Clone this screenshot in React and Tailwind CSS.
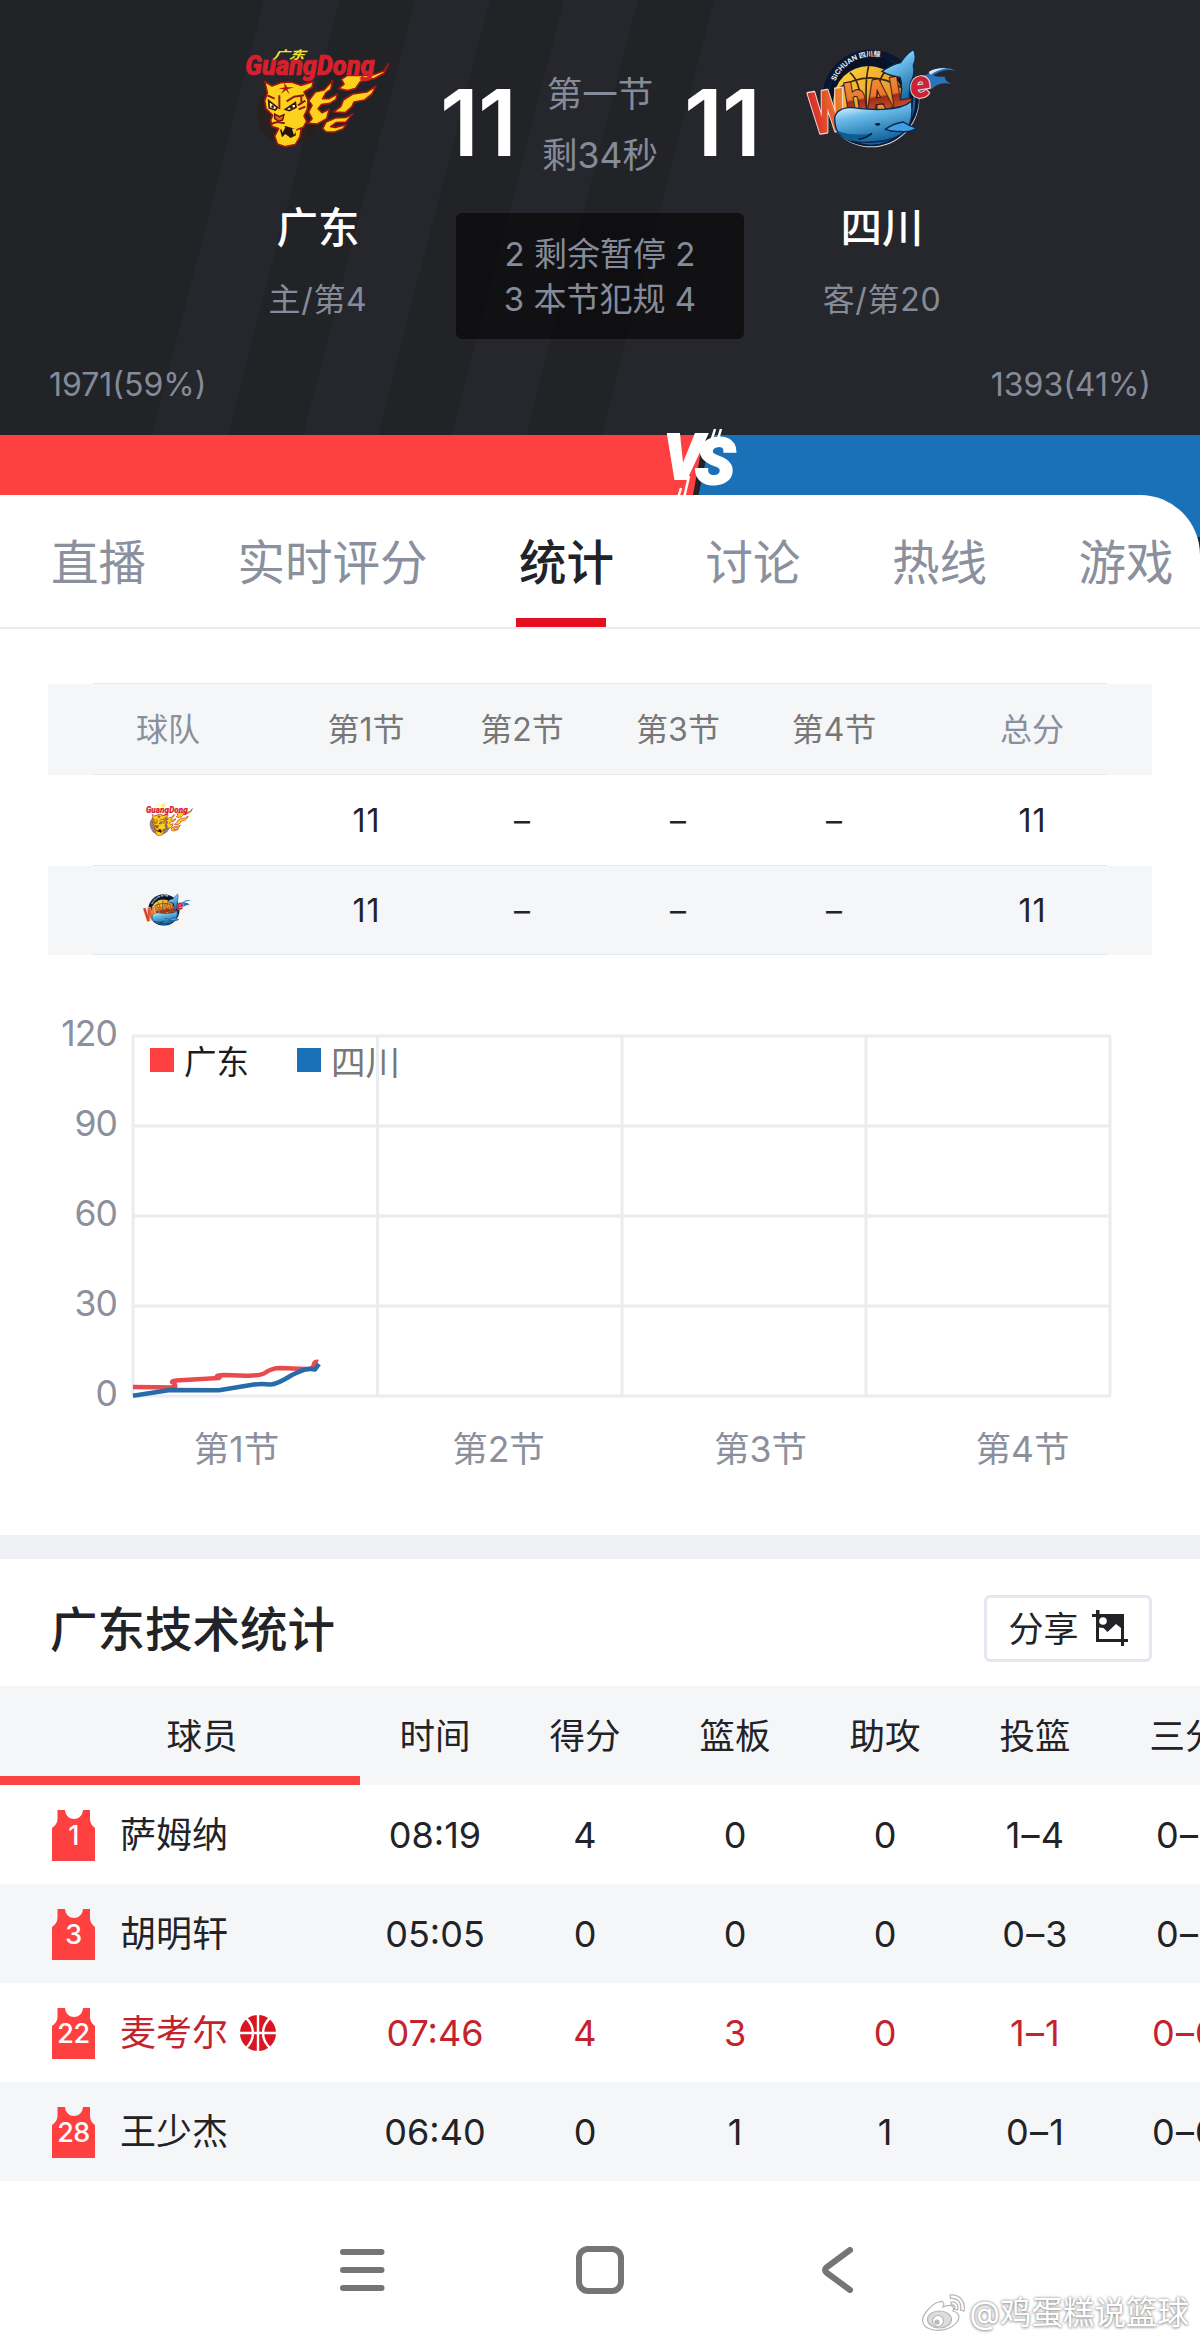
import React, { useState } from 'react';
import clsx from 'clsx';

const TABS = ['直播', '实时评分', '统计', '讨论', '热线', '游戏'];
const QUARTERS = ['第1节', '第2节', '第3节', '第4节'];
const STAT_COLUMNS = ['时间', '得分', '篮板', '助攻', '投篮', '三分'];

const PLAYERS = [
  { no: 1, name: '萨姆纳', stats: ['08:19', '4', '0', '0', '1–4', '0–1'] },
  { no: 3, name: '胡明轩', stats: ['05:05', '0', '0', '0', '0–3', '0–1'] },
  { no: 22, name: '麦考尔', onCourt: true, stats: ['07:46', '4', '3', '0', '1–1', '0–0'] },
  { no: 28, name: '王少杰', stats: ['06:40', '0', '1', '1', '0–1', '0–0'] },
];

const TigerLogo = ({ className }) => (
  <svg viewBox="0 0 510 360" className={className}>
    <circle cx="176" cy="218" r="96" fill="#2b1d16" opacity="0.55" />
    <g fill="#fdd21c" stroke="#a3160f" strokeWidth="5" strokeLinejoin="round">
      {/* Flames */}
      <path d="M308 122 L282 150 L256 156 L236 182 L246 196 L236 216 L246 236 L234 250 L262 252 L290 236 L298 208 L276 218 L264 206 L274 194 L300 190 L318 178 L322 162 L296 176 L278 176 L288 158 L302 148 Z" />
      <path d="M476 70 L462 92 L430 104 L396 106 L352 106 L334 118 L342 132 L326 146 L352 152 L376 146 L392 124 L432 116 L462 100 Z" />
      <path d="M438 138 L410 156 L368 162 L340 180 L332 200 L310 216 L346 218 L366 200 L372 186 L404 180 L426 162 Z" />
      <path d="M368 222 L348 232 L316 234 L288 246 L278 266 L288 276 L314 276 L340 266 L348 254 L316 262 L302 260 L318 248 L348 246 Z" />
      {/* Head */}
      <path d="M104 124 L126 138 L152 128 L184 126 L212 136 L250 124 L246 142 L222 156 L234 180 L232 208 L222 228 L230 244 L220 262 L198 270 L214 264 L210 290 L196 314 L166 320 L142 312 L134 288 L146 266 L126 260 L122 240 L128 226 L108 206 L104 182 L112 158 Z" />
    </g>
    <path d="M150 270 L166 258 L194 266 L198 286 L182 294 L166 282 L156 292 Z" fill="#2a1011" />
    <path d="M150 256 L158 278 L166 262 Z M186 266 L192 286 L200 266 Z" fill="#fdd21c" />
    <path d="M162 128 L164 142 L146 146 L162 148 L152 162 L168 150 L180 164 L172 148 L192 142 L172 142 Z" fill="#a3160f" />
    <path d="M116 182 L142 202 L136 210 L118 204 Z M166 208 L196 188 L198 202 L178 212 Z" fill="#f6f0a0" stroke="#3a1210" strokeWidth="5" />
    <circle cx="128" cy="200" r="4" fill="#222" />
    <circle cx="184" cy="202" r="5" fill="#222" />
    <path d="M134 222 L148 230 L162 224 L158 240 L146 244 L134 236 Z" fill="#e0611d" stroke="#5a1210" strokeWidth="4" />
    <path d="M112 166 L134 176 M222 166 L192 170 L170 184 M226 182 L204 196 M226 200 L206 208 M122 252 L142 246 L164 250 M214 168 L214 190 M148 166 L148 208" fill="none" stroke="#8e1a12" strokeWidth="6" />
    <text x="128" y="56" fontSize="34" fontStyle="italic" fontWeight="700" fill="#f1e52c" textLength="96" lengthAdjust="spacingAndGlyphs" transform="skewX(-12) translate(11 0)">广东</text>
    <text x="46" y="106" fontSize="82" fontFamily="Roboto" fontStyle="italic" fontWeight="900" fill="#d81f2c" stroke="#d81f2c" strokeWidth="2" textLength="388" lengthAdjust="spacingAndGlyphs">GuangDong</text>
  </svg>
);

const WhaleLogo = ({ className }) => (
  <svg viewBox="0 0 510 360" className={className}>
    <defs>
      <linearGradient id="ball" x1="0" y1="0" x2="1" y2="1">
        <stop offset="0" stopColor="#ffdc3c" />
        <stop offset="1" stopColor="#d86a1c" />
      </linearGradient>
      <linearGradient id="whale" x1="0.2" y1="0" x2="0.6" y2="1">
        <stop offset="0" stopColor="#ffffff" />
        <stop offset="0.35" stopColor="#69bce9" />
        <stop offset="1" stopColor="#0d5e98" />
      </linearGradient>
      <linearGradient id="word" x1="0" y1="0" x2="0" y2="1">
        <stop offset="0" stopColor="#f39a3a" />
        <stop offset="0.5" stopColor="#e9752c" />
        <stop offset="0.55" stopColor="#9c2c1c" />
        <stop offset="1" stopColor="#e8692e" />
      </linearGradient>
      <linearGradient id="initial" x1="0" y1="0" x2="1" y2="0">
        <stop offset="0" stopColor="#d9262b" />
        <stop offset="1" stopColor="#f08a2c" />
      </linearGradient>
      <path id="arc" d="M106 124 A122 122 0 0 1 290 72" />
    </defs>
    <circle cx="214" cy="178" r="144" fill="#cfd8e2" />
    <circle cx="212" cy="174" r="145" fill="#0a1730" />
    <circle cx="214" cy="182" r="132" fill="#1463a6" />
    <circle cx="212" cy="176" r="128" fill="#081226" />
    <circle cx="206" cy="184" r="106" fill="url(#ball)" />
    <path d="M206 78 Q190 140 206 280 M108 150 Q206 80 306 144 M150 98 Q190 130 180 240 M258 92 Q222 130 232 230" fill="none" stroke="#3a2412" strokeWidth="5" />
    <text fontSize="21" fontWeight="700" fill="#e5eaf2"><textPath href="#arc">SICHUAN 四川鲸</textPath></text>
    <path d="M470 92 Q420 70 380 104 L346 110 L352 156 L396 146 Q420 124 454 132 Q430 118 436 110 Q410 112 400 106 Q430 84 470 92 Z" fill="#2b74bb" />
    <path d="M386 96 Q400 84 440 84 Q410 90 392 104 Z" fill="#d5e9f5" />
    <path d="M340 28 Q352 50 340 76 Q346 104 332 126 Q326 160 330 190 L296 196 Q312 140 300 112 Q270 108 246 94 Q280 72 302 68 Q316 44 340 28 Z" fill="url(#whale)" stroke="#0a2850" strokeWidth="4" />
    <g transform="rotate(-9 210 190)" fontFamily="Roboto" fontWeight="900" strokeLinejoin="round">
      <text x="28" y="256" fontSize="176" fill="url(#initial)" stroke="#f3d9cf" strokeWidth="8" paintOrder="stroke" textLength="108" lengthAdjust="spacingAndGlyphs">W</text>
      <text x="138" y="212" fontSize="124" fill="url(#word)" stroke="#3a1a1a" strokeWidth="7" paintOrder="stroke" textLength="196" lengthAdjust="spacingAndGlyphs">hAL</text>
      <text x="336" y="196" fontSize="116" fontStyle="italic" fill="#cc2238" stroke="#f3d9cf" strokeWidth="6" paintOrder="stroke">e</text>
    </g>
    <path d="M104 234 Q108 206 150 202 Q200 210 250 208 Q310 206 334 184 Q342 240 318 272 Q280 304 220 306 Q150 312 116 282 Q104 262 104 234 Z" fill="url(#whale)" stroke="#0a2850" strokeWidth="4" />
    <path d="M112 272 Q160 290 216 280 Q190 304 150 302 Q124 294 112 272 Z" fill="#0e5c93" />
    <path d="M256 268 Q280 250 310 246 Q330 260 350 264 Q330 278 302 274 Q276 276 256 268 Z" fill="#3e9fe0" stroke="#0a2850" strokeWidth="4" />
    <path d="M176 298 Q200 294 216 280" fill="none" stroke="#091a33" strokeWidth="5" />
    <ellipse cx="233" cy="253" rx="8" ry="4" fill="#091a33" />
  </svg>
);

const Jersey = ({ no }) => (
  <div className="relative flex h-[51px] w-[43px] items-center justify-center">
    <svg viewBox="0 0 43 51" className="absolute inset-0 h-full w-full" fill="#ff4040">
      <path d="M5.5 0 H13 C14 12 30 12 31 0 H38 V9 C38 13 40 16 43 18 V51 H0 V18 C3 16 5.5 13 5.5 9 Z" />
    </svg>
    <span className="relative text-[27px] leading-none font-medium tracking-[-0.5px] text-white">{no}</span>
  </div>
);

const Basketball = () => (
  <svg viewBox="0 0 36 36" className="h-[36px] w-[36px]">
    <circle cx="18" cy="18" r="18" fill="#da1420" />
    <path d="M18 0 V36 M0 18 H36 M5 2 Q13 9 13 18 Q13 27 5 34 M31 2 Q23 9 23 18 Q23 27 31 34" fill="none" stroke="#fff" strokeWidth="2.4" />
  </svg>
);

const Team = ({ logo, name, rank }) => (
  <div className="flex w-[176px] flex-col items-center">
    {logo}
    <div className="mt-[39px] flex h-[60px] shrink-0 items-center text-[41.5px] leading-none font-medium text-white">{name}</div>
    <div className="mt-[11px] flex h-[60px] shrink-0 items-center text-[32px] leading-none tracking-[0.7px]">{rank}</div>
  </div>
);

const Score = ({ value }) => (
  <div className="flex w-[68px] justify-center text-[92px] leading-none font-semibold tracking-[-1px] text-white">{value}</div>
);

const ScoreHeader = () => (
  <header className="relative h-[435px] bg-[#222327] text-[#868b99]">
    <svg viewBox="0 0 1200 435" className="absolute inset-0 h-full w-full" fill="#26272c">
      <path d="M264 0 H340 L228 435 H152 Z M415 0 H490 L378 435 H303 Z M564 0 H638 L526 435 H452 Z M714 0 H1200 V435 H602 Z" />
    </svg>
    <div className="relative flex h-[340px] justify-between px-[230px] pt-[40px]">
      <Team logo={<TigerLogo className="h-[120px] w-[170px] shrink-0 self-start" />} name="广东" rank="主/第4" />
      <div className="flex w-[312px] flex-col items-center pt-[22px]">
        <div className="flex h-[122px] w-full shrink-0 items-center justify-between">
          <Score value="11" />
          <div className="flex flex-col items-center pt-[3px] text-[35.5px] leading-[61px]">
            <span>第一节</span>
            <span>剩34秒</span>
          </div>
          <Score value="11" />
        </div>
        <div className="mt-[29px] flex h-[126px] w-[288px] shrink-0 flex-col items-center justify-center rounded-md bg-black/55 pt-[2px] text-[33px] leading-[45px]">
          <span>2 剩余暂停 2</span>
          <span>3 本节犯规 4</span>
        </div>
      </div>
      <Team logo={<WhaleLogo className="h-[120px] w-[170px] shrink-0 self-end" />} name="四川" rank="客/第20" />
    </div>
    <div className="relative mt-[15px] flex h-[60px] items-center justify-between px-[49px] text-[32px] leading-none">
      <span>1971(59%)</span>
      <span>1393(41%)</span>
    </div>
  </header>
);

const VoteBar = () => (
  <div className="relative h-[60px]">
    <svg viewBox="0 0 1200 117" className="absolute top-[-15px] left-0 h-[117px] w-full">
      <path d="M0 15 H704 L693 75 V117 H0 Z" fill="#ff4040" />
      <path d="M711 15 H1200 V117 H690 Z" fill="#1a71b8" />
      <path d="M715 9 L711 22 M721 9 L717 22 M681 68 L678 78 M689 56 L684 78" stroke="#fff" strokeWidth="2.5" />
      <text x="664" y="59" fontSize="63" fontFamily="Roboto" fontStyle="italic" fontWeight="900" fill="#fff" stroke="#fff" strokeWidth="2" textLength="39" lengthAdjust="spacingAndGlyphs">V</text>
      <text x="695" y="64" fontSize="65" fontFamily="Roboto" fontStyle="italic" fontWeight="900" fill="#fff" stroke="#fff" strokeWidth="2" textLength="40" lengthAdjust="spacingAndGlyphs">S</text>
    </svg>
  </div>
);

const Tabs = () => {
  const [active, setActive] = useState('统计');
  return (
    <nav className="flex h-[134px] gap-[91.5px] border-b-2 border-[#e9ebed] pl-[51px] text-[47.5px] leading-none whitespace-nowrap text-[#8a909d]">
      {TABS.map((tab) => (
        <button
          key={tab}
          onClick={() => setActive(tab)}
          className={clsx('relative shrink-0 pt-[4px]', active === tab && 'font-medium text-[#222327]')}
        >
          {tab}
          {active === tab && <span className="absolute bottom-0 left-[-3px] h-[9px] w-[90px] bg-[#e60f1f]" />}
        </button>
      ))}
    </nav>
  );
};

const QuarterRow = ({ shaded, header, last, cells }) => (
  <div className={clsx('px-[45px]', last ? 'h-[89px]' : 'h-[91px]', shaded && 'bg-[#f5f6f8]')}>
    <div className="grid h-full grid-cols-[150px_45px_repeat(4,156px)_45px_150px] items-center justify-items-center border-b border-[#e6e9ec]">
      {cells.map((cell, i) => (
        <div
          key={i}
          className={clsx(
            'pt-px text-[32px] leading-none',
            i === 1 && 'col-start-3',
            i === 5 && 'col-start-8',
            !header && 'pl-px tracking-[1px] text-[#222327]',
            header && (i === 0 || i === 5 ? 'text-[#8a8f9c]' : 'text-[#777]')
          )}
        >
          {cell}
        </div>
      ))}
    </div>
  </div>
);

const QuarterTable = () => (
  <section className="mt-[54px] px-[48px]">
    <div className="mx-[45px] h-px bg-[#e6e9ec]" />
    <QuarterRow shaded header cells={['球队', ...QUARTERS, '总分']} />
    <QuarterRow cells={[<TigerLogo className="h-[39px] w-[55px]" />, '11', '–', '–', '–', '11']} />
    <QuarterRow shaded last cells={[<WhaleLogo className="h-[39px] w-[55px]" />, '11', '–', '–', '–', '11']} />
  </section>
);

const ScoreChart = () => (
  <section className="mt-[45px] h-[535px]">
    <svg viewBox="0 1000 1200 535" className="h-[535px] w-[1200px]">
      <g stroke="#ebecf0" strokeWidth="3">
        {[1036, 1126, 1216, 1306, 1396].map((y) => <line key={y} x1="132" x2="1111" y1={y} y2={y} />)}
        {[133, 377.5, 622, 866, 1110].map((x) => <line key={x} x1={x} x2={x} y1="1036" y2="1396" />)}
      </g>
      <g fill="#8b909c" fontSize="35.5" letterSpacing="-0.9" textAnchor="end">
        {[120, 90, 60, 30, 0].map((v, i) => <text key={v} x="117" y={1046 + i * 90}>{v}</text>)}
      </g>
      <g fill="#8b909c" fontSize="35.5" textAnchor="middle">
        {QUARTERS.map((q, i) => <text key={q} x={236.5 + i * 262} y="1462">{q}</text>)}
      </g>
      <rect x="150" y="1048" width="24" height="24" fill="#ff4040" />
      <text x="184" y="1074" fontSize="32.5" fill="#1c1c1e">广东</text>
      <rect x="297" y="1048" width="24" height="24" fill="#1a71b8" />
      <text x="331" y="1075" fontSize="34.5" fill="#777">四川</text>
      <g fill="none" strokeWidth="4.5" strokeLinejoin="round">
        <path d="M133 1387 L175 1387.5 Q176 1384 172 1382 Q172 1381 176 1380.5 L219 1378 Q221 1377 217 1376 Q218 1375 224 1375 L246 1375.7 Q258 1376 264 1373.5 Q272 1368 280 1368 L306 1369 Q313 1370 314 1364 Q315 1361 318 1362" stroke="#ea4a4d" />
        <path d="M133 1395.7 L170 1390 L219 1390.3 L254 1384.5 Q262 1383.5 270 1384.5 Q276 1385 292 1375 Q304 1369 309 1368.7 L315 1369.5 L319 1364" stroke="#276ca8" />
      </g>
    </svg>
  </section>
);

const ShareIcon = () => (
  <svg viewBox="0 0 36 36" className="h-[36px] w-[36px]" fill="#222327">
    <path d="M4 0 H7.5 V4 H32 V29 H36 V32 H32 V36 H29 V32 H4 V7 H0 V4 H4 Z M7 17.5 V29 H29 V18 L24 14 L15.5 22 L11.5 18 Z" fillRule="evenodd" />
    <circle cx="11" cy="11" r="3.8" fill="#fff" />
  </svg>
);

const TeamStats = () => (
  <section className="border-t-24 border-[#f0f1f4] text-[#222327]">
    <div className="flex h-[127px] items-center justify-between px-[48px] pt-[12px]">
      <h2 className="pt-[2px] pl-[2px] text-[47.5px] leading-none font-medium">广东技术统计</h2>
      <button className="mb-px flex h-[67px] w-[168px] items-center justify-center gap-[13px] rounded-md border-3 border-[#e2e7f0] text-[35px] leading-none">
        <span className="pt-[2px]">分享</span>
        <ShareIcon />
      </button>
    </div>
    <div className="flex h-[99px] overflow-hidden bg-[#f5f6f8] text-[35.5px] leading-none">
      <div className="flex w-[360px] shrink-0 items-center justify-center border-b-9 border-[#fc4343] pt-[12px] pl-[44px]">球员</div>
      {STAT_COLUMNS.map((col) => (
        <div key={col} className="flex w-[150px] shrink-0 items-center justify-center pt-[3px]">{col}</div>
      ))}
    </div>
    {PLAYERS.map((p) => (
      <div
        key={p.no}
        className={clsx('flex h-[99px] overflow-hidden pt-px text-[36px] leading-none even:bg-[#f5f6f8]', p.onCourt && 'text-[#c4232e]')}
      >
        <div className="flex w-[360px] shrink-0 items-center pl-[52px]">
          <Jersey no={p.no} />
          <span className="ml-[25px] text-[36px]">{p.name}</span>
          {p.onCourt && <span className="ml-[12px]"><Basketball /></span>}
        </div>
        {p.stats.map((s, i) => (
          <div key={i} className={clsx('flex w-[150px] shrink-0 items-center justify-center', i > 3 && 'pl-px tracking-[1.2px]')}>{s}</div>
        ))}
      </div>
    ))}
  </section>
);

const SystemNav = () => (
  <footer className="relative flex h-[160px] items-center justify-center gap-[191px] pt-[17px]">
    <svg viewBox="0 0 46 46" className="h-[46px] w-[46px]" stroke="#757575" strokeWidth="6" strokeLinecap="round">
      <path d="M4 5 H42.500 M4 23 H42.500 M4 41 H42.500" />
    </svg>
    <svg viewBox="0 0 48 48" className="h-[48px] w-[48px]" fill="none" stroke="#757575" strokeWidth="6">
      <rect x="3" y="3" width="42" height="42" rx="9" />
    </svg>
    <svg viewBox="0 0 46 46" className="h-[46px] w-[46px]" fill="none" stroke="#757575" strokeWidth="6" strokeLinecap="round" strokeLinejoin="round">
      <path d="M35 3 L12 20 Q8 23 12 26 L35 43" />
    </svg>
    <div className="absolute right-[11px] bottom-[9px] flex items-center gap-[4px] text-[31.5px] leading-none text-white [text-shadow:0_0_3px_#888,0_1px_3px_#aaa]">
      <svg viewBox="0 0 44 38" className="h-[38px] w-[44px]" fill="#fff" stroke="#b5b5b5" strokeWidth="1.2">
        <path d="M17 8 C21 6 23 9 21 13 C28 10 33 11 31 17 C38 19 38 24 35 28 C29 36 16 38 8 35 C-1 32 -1 24 4 18 C8 13 12 9 17 8 Z" />
        <ellipse cx="17.500" cy="25.500" rx="12" ry="8.500" fill="#ddd" />
        <circle cx="16" cy="27" r="5.500" />
        <circle cx="15" cy="28" r="2" fill="#bbb" />
        <path d="M28 1 C38 0 44 8 42 17 L38.500 16 C40 9 36 4 28.500 4.500 Z M29 8 C34 7 37 11 35.500 16 L32.500 15 C33.500 12 32 10.500 29.500 11 Z" />
      </svg>
      <span>@鸡蛋糕说篮球</span>
    </div>
  </footer>
);

export default function App() {
  return (
    <div className="w-[1200px] overflow-hidden bg-[#222327] font-['Inter','Noto_Sans_CJK_SC',sans-serif]">
      <ScoreHeader />
      <VoteBar />
      <main className="relative overflow-hidden rounded-tr-[60px] bg-white">
        <Tabs />
        <QuarterTable />
        <ScoreChart />
        <TeamStats />
        <SystemNav />
      </main>
    </div>
  );
}
